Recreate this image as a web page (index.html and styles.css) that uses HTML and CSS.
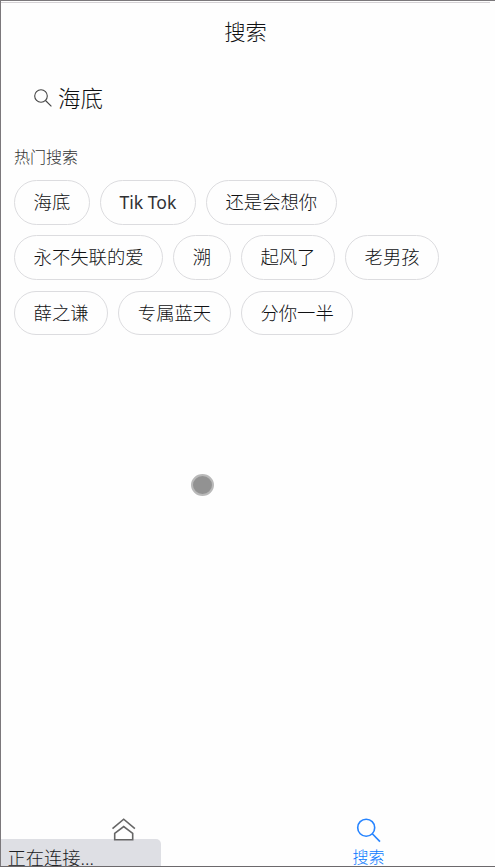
FILE: index.html
```html
<!DOCTYPE html>
<html lang="zh-CN">
<head>
<meta charset="utf-8">
<title>搜索</title>
<link rel="stylesheet" href="styles.css">
</head>
<body>
<div class="app">
  <header class="header">搜索</header>
  <div class="search">
    <svg class="search-icon" viewBox="0 0 18 18"><circle cx="7" cy="7" r="6.3"/><path d="M11.5 11.5L17.4 17.4"/></svg>
    <span class="search-text">海底</span>
  </div>
  <main class="content">
    <h2 class="label">热门搜索</h2>
    <div class="tags">
      <span class="tag">海底</span>
      <span class="tag tag-latin">Tik Tok</span>
      <span class="tag">还是会想你</span>
      <span class="tag">永不失联的爱</span>
      <span class="tag">溯</span>
      <span class="tag">起风了</span>
      <span class="tag">老男孩</span>
      <span class="tag">薛之谦</span>
      <span class="tag">专属蓝天</span>
      <span class="tag">分你一半</span>
    </div>
  </main>
  <nav class="tabbar">
    <div class="tab">
      <svg class="tab-icon" viewBox="0 0 26 26"><path d="M1.5 10.7L12.7 1.2L23.9 10.7M3.7 21.7V15.3L12.7 8.5L21.7 15.3V21.7Z"/></svg>
    </div>
    <div class="tab active">
      <svg class="tab-icon" viewBox="0 0 26 26"><circle cx="10.2" cy="9.7" r="8.5"/><path d="M16.3 15.8L24 23.6"/></svg>
      <span class="tab-text">搜索</span>
    </div>
  </nav>
</div>
<div class="status">正在连接...</div>
<div class="touch"></div>
<div class="baseline"></div>
</body>
</html>
```
FILE: styles.css
```css
* { box-sizing: border-box; }
body {
  margin: 0;
  height: 867px;
  overflow: hidden;
  position: relative;
  background: #fefefe;
  color: #101113;
  font-family: "Noto Sans", "Noto Sans CJK SC", sans-serif;
  font-weight: 300;
}
.app {
  height: 867px;
  display: flex;
  flex-direction: column;
  border-top: 1px solid #7b787b;
  border-left: 1px solid #7b787b;
}
.header {
  height: 62px;
  margin-top: 1px;
  margin-right: 5px;
  border-top: 1px solid #d5d2d5;
  text-align: center;
  font-size: 21.3px;
  line-height: 58px;
}
.search {
  height: 68px;
  padding-left: 33px;
  display: flex;
  align-items: center;
}
.search-icon {
  width: 18px;
  height: 18px;
  margin-right: 6px;
  fill: none;
  stroke: #444;
  stroke-width: 1.1;
}
.search-text { font-size: 22.5px; line-height: 30px; padding-top: 2px; }
.content { padding-left: 13px; flex: 1; }
.label {
  margin: 13px 0 11px;
  font-size: 16px;
  line-height: 24px;
  font-weight: 300;
  color: #333;
}
.tags { display: flex; flex-wrap: wrap; gap: 10.7px 10px; }
.tag {
  height: 44.7px;
  padding: 0 18.6px;
  border: 1px solid #dcdcdf;
  border-radius: 23px;
  font-size: 18.35px;
  line-height: 42.7px;
  white-space: nowrap;
}
.tag-latin {
  font-family: "Noto Sans", sans-serif;
  font-size: 17.6px;
  font-weight: 400;
  color: #303133;
  width: 96px;
  padding: 0;
  text-align: center;
}
.tabbar { height: 49px; display: flex; margin-right: 4px; }
.tab {
  flex: 1;
  display: flex;
  flex-direction: column;
  align-items: center;
}
.tab-icon {
  position: relative;
  z-index: 1;
  flex: none;
  width: 26px;
  height: 26px;
  fill: none;
  stroke: #666;
  stroke-width: 1.6;
}
.tab-text { font-size: 16px; line-height: 22px; margin-top: 2px; }
.active { color: #0878ff; }
.active .tab-icon { stroke: #2684ff; }
.status {
  position: absolute;
  left: 1px;
  bottom: 0;
  width: 160px;
  height: 28px;
  padding-left: 6.5px;
  overflow: hidden;
  border-top-right-radius: 5px;
  background: #dedfe4;
  color: #202124;
  font-size: 18.3px;
  line-height: 38px;
}
.touch {
  position: absolute;
  left: 191px;
  top: 474px;
  width: 23px;
  height: 22px;
  border: 2.5px solid #b9b9b9;
  border-radius: 50%;
  background: #929292;
}
.baseline {
  position: absolute;
  left: 0;
  right: 0;
  bottom: 0;
  height: 1px;
  background: #6c696c;
}
```
